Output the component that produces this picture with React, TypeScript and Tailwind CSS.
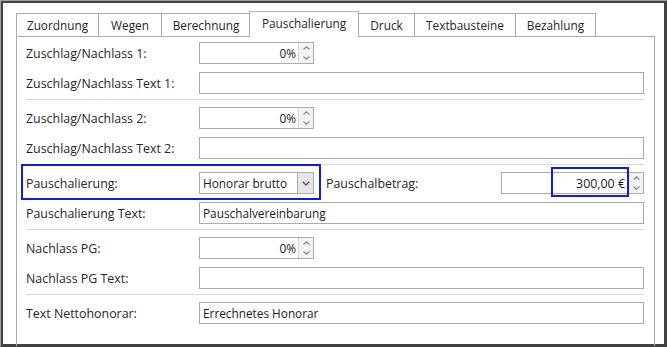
import React from "react";

const tabs = [
  { label: "Zuordnung", w: "w-[83px]" },
  { label: "Wegen", w: "w-[64px]" },
  { label: "Berechnung", w: "w-[90px]" },
  { label: "Pauschalierung", w: "w-[110px]", active: true },
  { label: "Druck", w: "w-[57px]" },
  { label: "Textbausteine", w: "w-[102px]" },
  { label: "Bezahlung", w: "w-[81px]" },
];

function Chevron({ up }: { up?: boolean }) {
  return (
    <svg width="7" height="4" viewBox="0 0 7 4" className="block">
      <path
        d={up ? "M0.5 3.5 L3.5 0.8 L6.5 3.5" : "M0.5 0.5 L3.5 3.2 L6.5 0.5"}
        fill="none"
        stroke="#8a8a8a"
        strokeWidth="1.2"
      />
    </svg>
  );
}

function SpinButtons() {
  return (
    <div className="flex w-[15px] flex-col border-l border-[#d6d6d6] bg-[#f3f3f3]">
      <div className="flex flex-1 items-center justify-center">
        <Chevron up />
      </div>
      <div className="flex flex-1 items-center justify-center">
        <Chevron />
      </div>
    </div>
  );
}

function SpinBox({ value }: { value: string }) {
  return (
    <div className="flex h-[22px] w-[115px] border border-[#ababab] bg-white">
      <div className="flex flex-1 items-center justify-end pr-[2px] pt-[2px] text-[11.8px] text-[#1a1a1a]">{value}</div>
      <SpinButtons />
    </div>
  );
}

function TextBox({ value = "" }: { value?: string }) {
  return (
    <div className="flex h-[22px] flex-1 items-center border border-[#ababab] bg-white pl-[3px] pt-[2px] text-[11.8px] text-[#1a1a1a]">
      {value}
    </div>
  );
}

function Row({ label, children }: { label: string; children: React.ReactNode }) {
  return (
    <div className="flex h-[22px] items-center">
      <div className="w-[173px] shrink-0 pt-[2px]">{label}</div>
      {children}
    </div>
  );
}

function Sep() {
  return <div className="mb-[7px] mt-[5px] h-px bg-[#d7d7d7]" />;
}

export default function App() {
  return (
    <div
      className="relative h-[347px] w-[667px] overflow-hidden border border-b-[#404040] border-l-[#a0a0a0] border-r-[#404040] border-t-[#a0a0a0] bg-white text-[12.4px] text-[#262626]"
      style={{ fontFamily: '"Open Sans", "DejaVu Sans", sans-serif' }}
    >
      <div className="h-full border-2 border-[#424242] pl-[13px] pr-[9px] pt-[8px]">
        {/* Tab-Leiste */}
        <div className="flex h-[25px] items-end text-[11.8px]">
          {tabs.map((t, i) =>
            t.active ? (
              <div
                key={t.label}
                className={`relative z-10 -mb-px ml-[-2px] flex h-[26px] items-start justify-center border border-b-0 border-[#a9a9a9] bg-white pt-[3px] ${t.w}`}
              >
                {t.label}
              </div>
            ) : (
              <div
                key={t.label}
                className={`flex h-[23px] items-start justify-center border border-b-0 border-[#a9a9a9] bg-white pt-[3px] ${t.w} ${i === 0 ? "" : "ml-[-1px]"}`}
              >
                {t.label}
              </div>
            )
          )}
        </div>

        {/* Panel */}
        <div className="h-[320px] border border-b-0 border-[#a9a9a9] pl-[9px] pr-[10px] pt-[5px]">
          <div className="flex flex-col gap-[8px]">
            <Row label="Zuschlag/Nachlass 1:">
              <SpinBox value="0%" />
            </Row>
            <Row label="Zuschlag/Nachlass Text 1:">
              <TextBox />
            </Row>
          </div>
          <Sep />
          <div className="flex flex-col gap-[8px]">
            <Row label="Zuschlag/Nachlass 2:">
              <SpinBox value="0%" />
            </Row>
            <Row label="Zuschlag/Nachlass Text 2:">
              <TextBox />
            </Row>
          </div>
          <Sep />
          <div className="flex flex-col gap-[8px]">
            <Row label="Pauschalierung:">
              <div className="flex h-[22px] w-[115px] border border-[#ababab] bg-white">
                <div className="flex flex-1 items-center pl-[3px] pt-[2px] text-[11.8px] text-[#1a1a1a]">Honorar brutto</div>
                <div className="flex w-[16px] items-center justify-center border-l border-[#acacac] bg-[#e5e5e5]">
                  <svg width="8" height="5" viewBox="0 0 8 5" className="block">
                    <path d="M0.8 0.8 L4 4 L7.2 0.8" fill="none" stroke="#606060" strokeWidth="1.5" />
                  </svg>
                </div>
              </div>
              <div className="ml-[12px] w-[175px] shrink-0 pt-[2px]">Pauschalbetrag:</div>
              <div className="flex h-[22px] flex-1 border border-[#ababab] bg-white">
                <div className="flex flex-1 items-center justify-end pr-[3px] pt-[2px] text-[12.4px] text-[#1a1a1a]">300,00 €</div>
                <SpinButtons />
              </div>
            </Row>
            <Row label="Pauschalierung Text:">
              <TextBox value="Pauschalvereinbarung" />
            </Row>
          </div>
          <Sep />
          <div className="flex flex-col gap-[8px]">
            <Row label="Nachlass PG:">
              <SpinBox value="0%" />
            </Row>
            <Row label="Nachlass PG Text:">
              <TextBox />
            </Row>
          </div>
          <Sep />
          <Row label="Text Nettohonorar:">
            <TextBox value="Errechnetes Honorar" />
          </Row>
        </div>
      </div>

      {/* Markierungen */}
      <div className="pointer-events-none absolute left-[20px] top-[163px] h-[36px] w-[300px] border-2 border-[#0a1ee6]" />
      <div className="pointer-events-none absolute left-[550px] top-[166px] h-[30px] w-[78px] border-2 border-[#0a1ee6]" />
    </div>
  );
}
